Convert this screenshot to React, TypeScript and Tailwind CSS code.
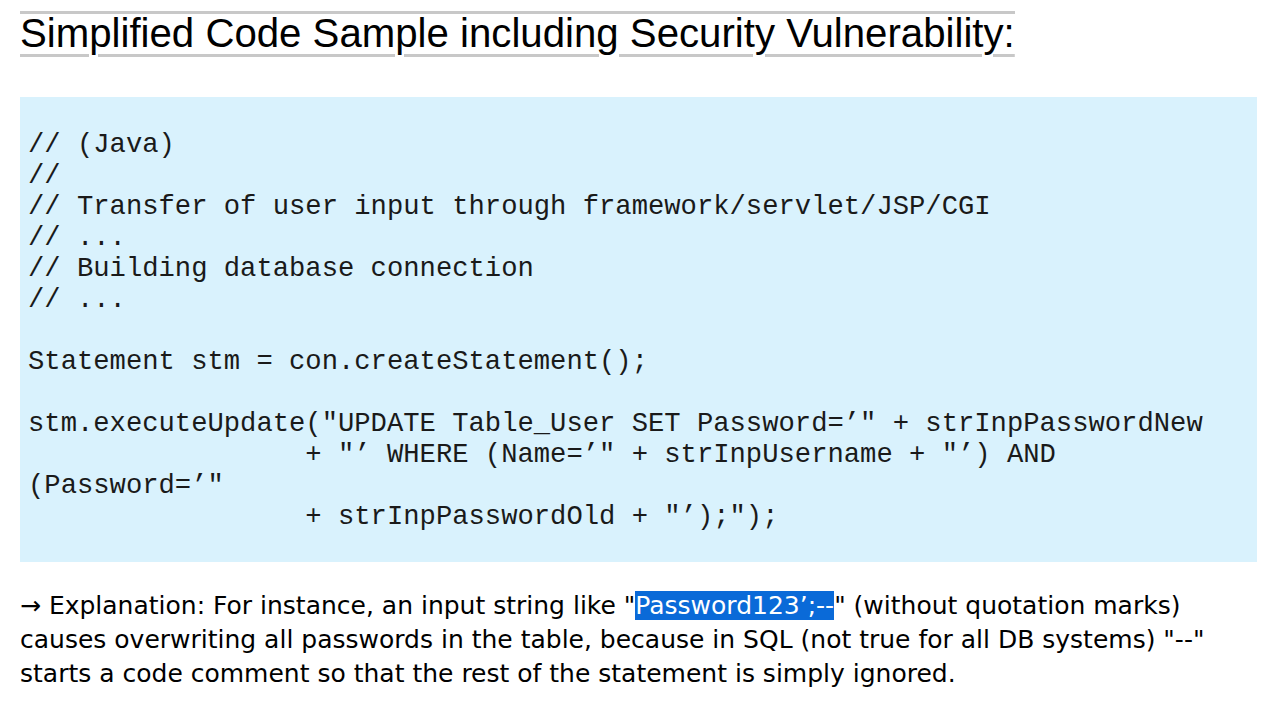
import React from 'react';

const codeLines = [
  '// (Java)',
  '//',
  '// Transfer of user input through framework/servlet/JSP/CGI',
  '// ...',
  '// Building database connection',
  '// ...',
  '',
  'Statement stm = con.createStatement();',
  '',
  'stm.executeUpdate("UPDATE Table_User SET Password=\u2019" + strInpPasswordNew',
  '                 + "\u2019 WHERE (Name=\u2019" + strInpUsername + "\u2019) AND',
  '(Password=\u2019"',
  '                 + strInpPasswordOld + "\u2019);");',
];

export default function App() {
  return (
    <div className="w-[1280px] h-[720px] bg-white overflow-hidden px-5 pt-[11px]">
      {/* Titel */}
      <h1 className="inline-block border-t-[3px] border-[#c8c8c8] font-['Liberation_Sans',Arial,sans-serif] text-[40.2px] leading-[40px] text-black">
        <span className="underline decoration-[#c8c8c8] decoration-[3px] underline-offset-[7px]">
          Simplified Code Sample including Security Vulnerability:
        </span>
      </h1>

      {/* Code */}
      <div className="mt-[43px] w-[1237px] h-[465px] bg-[#d9f2fd] pt-[32px] pl-2">
        <pre className="font-['Liberation_Mono','Courier_New',monospace] text-[27.2px] leading-[31px] text-[#1a1a1a]">
          {codeLines.join('\n')}
        </pre>
      </div>

      {/* Erklärung */}
      <p className="mt-[27px] font-['DejaVu_Sans',Tahoma,sans-serif] text-[25px] leading-[34px] text-black whitespace-nowrap">
        → Explanation: For instance, an input string like "
        <span className="bg-[#0a6ad8] text-white">Password123’;--</span>
        " (without quotation marks)
        <br />
        causes overwriting all passwords in the table, because in SQL (not true for all DB systems) "--"
        <br />
        starts a code comment so that the rest of the statement is simply ignored.
      </p>
    </div>
  );
}
